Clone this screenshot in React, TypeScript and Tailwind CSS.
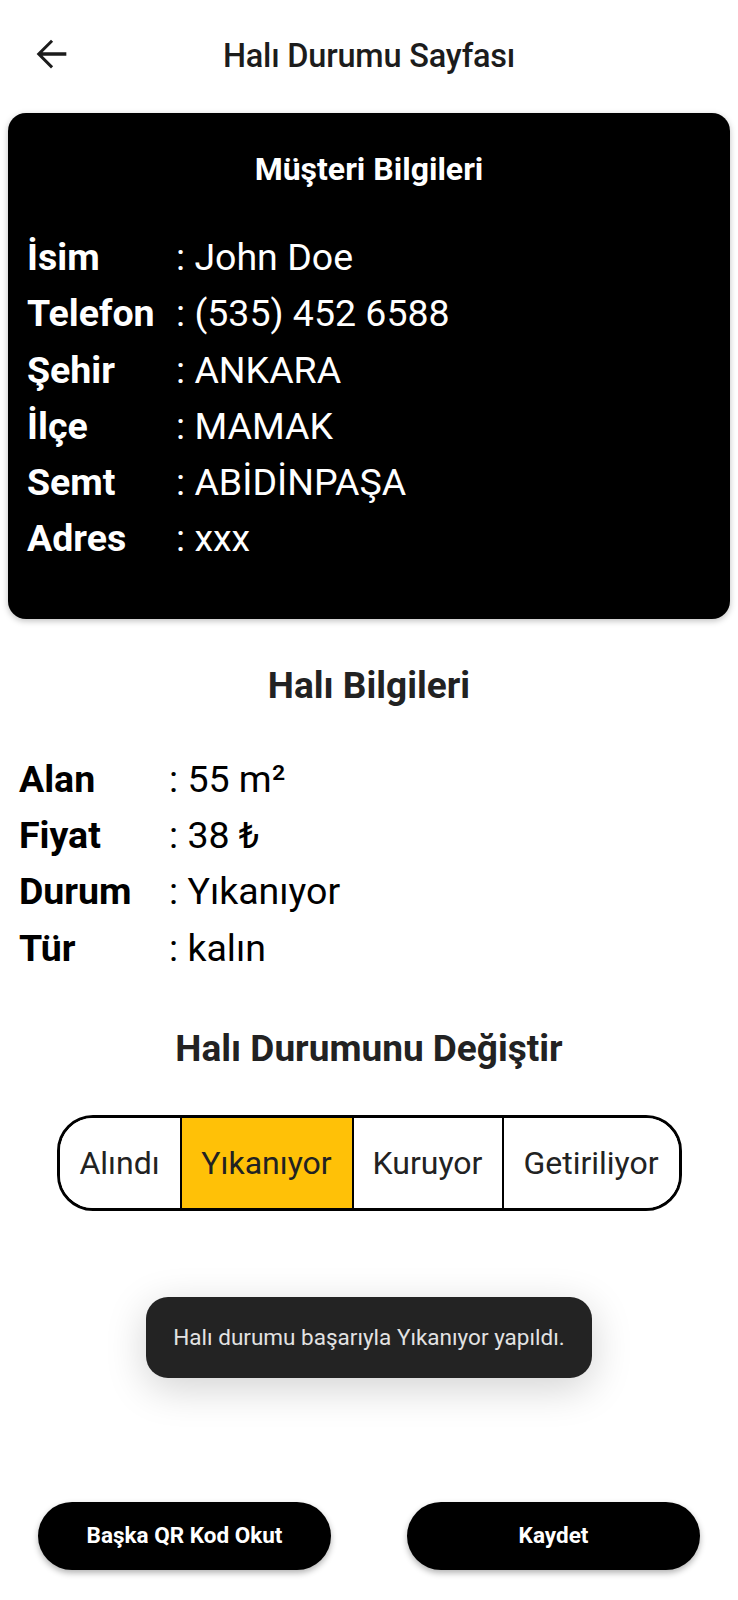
import { useState } from "react";

const customer = [
  { label: "İsim", value: "John Doe" },
  { label: "Telefon", value: "(535) 452 6588" },
  { label: "Şehir", value: "ANKARA" },
  { label: "İlçe", value: "MAMAK" },
  { label: "Semt", value: "ABİDİNPAŞA" },
  { label: "Adres", value: "xxx" },
];

const carpet = [
  { label: "Alan", value: "55 m²" },
  { label: "Fiyat", value: "38 ₺" },
  { label: "Durum", value: "Yıkanıyor" },
  { label: "Tür", value: "kalın" },
];

const statuses = [
  { name: "Alındı", width: "w-[120px]" },
  { name: "Yıkanıyor", width: "w-[172px]" },
  { name: "Kuruyor", width: "w-[150px]" },
  { name: "Getiriliyor", width: "flex-1" },
];

export default function App() {
  const [status, setStatus] = useState("Yıkanıyor");

  return (
    <div className="min-h-screen bg-white font-['Roboto',sans-serif] text-[#1c1c1c]">
      <header className="relative flex h-[113px] items-center justify-center">
        <button className="absolute left-[24px] top-[27px] p-1 text-[#1c1c1c]" aria-label="Geri">
          <svg viewBox="0 0 24 24" className="h-[46px] w-[46px]" fill="currentColor">
            <path d="M20 11.1H7.6l5.5-5.5L12 4.5 4.5 12l7.5 7.5 1.1-1.1-5.5-5.5H20v-1.8z" />
          </svg>
        </button>
        <h1 className="text-[32.5px] font-medium tracking-[-0.2px]">Halı Durumu Sayfası</h1>
      </header>

      <section className="mx-2 rounded-[18px] bg-black px-[19px] pb-[52px] pt-[36px] text-white shadow-[0_2px_6px_rgba(0,0,0,0.25)]">
        <h2 className="text-center text-[32px] font-bold leading-[40px]">Müşteri Bilgileri</h2>
        <div className="mt-[40px]">
          {customer.map((row) => (
            <div key={row.label} className="flex text-[37.5px] leading-[56.3px]">
              <span className="w-[149px] font-bold">{row.label}</span>
              <span>: {row.value}</span>
            </div>
          ))}
        </div>
      </section>

      <section className="px-[19px]">
        <h2 className="mt-[44px] text-center text-[37px] font-bold leading-[46px] text-[#222]">Halı Bilgileri</h2>
        <div className="mt-[42px]">
          {carpet.map((row) => (
            <div key={row.label} className="flex text-[37.5px] leading-[56.3px] text-black">
              <span className="w-[150px] font-bold">{row.label}</span>
              <span>: {row.value}</span>
            </div>
          ))}
        </div>
        <h2 className="mt-[50px] text-center text-[37px] font-bold leading-[46px] text-[#222]">Halı Durumunu Değiştir</h2>
      </section>

      <div className="mt-[43px] flex justify-center">
        <div className="flex h-[96px] w-[625px] overflow-hidden rounded-[36px] border-[3px] border-black">
          {statuses.map((s, i) => (
            <button
              key={s.name}
              onClick={() => setStatus(s.name)}
              className={`${s.width} flex items-center justify-center text-[32px] text-[#222] ${i > 0 ? "border-l-2 border-black" : ""} ${status === s.name ? "bg-[#ffc107]" : "bg-white"}`}
            >
              {s.name}
            </button>
          ))}
        </div>
      </div>

      <div className="mt-[86px] flex justify-center">
        <div className="flex h-[81px] w-[446px] items-center justify-center rounded-[22px] bg-[#232323] text-[22.5px] text-[#e2e2e2] shadow-[0_10px_40px_rgba(0,0,0,0.18)]">
          Halı durumu başarıyla Yıkanıyor yapıldı.
        </div>
      </div>

      <div className="mt-[124px] flex justify-between px-[38px] pb-[30px]">
        <button className="h-[68px] w-[293px] rounded-full bg-black text-[22.5px] font-bold text-white shadow-[0_3px_6px_rgba(0,0,0,0.3)]">
          Başka QR Kod Okut
        </button>
        <button className="h-[68px] w-[293px] rounded-full bg-black text-[22.5px] font-bold text-white shadow-[0_3px_6px_rgba(0,0,0,0.3)]">
          Kaydet
        </button>
      </div>
    </div>
  );
}
